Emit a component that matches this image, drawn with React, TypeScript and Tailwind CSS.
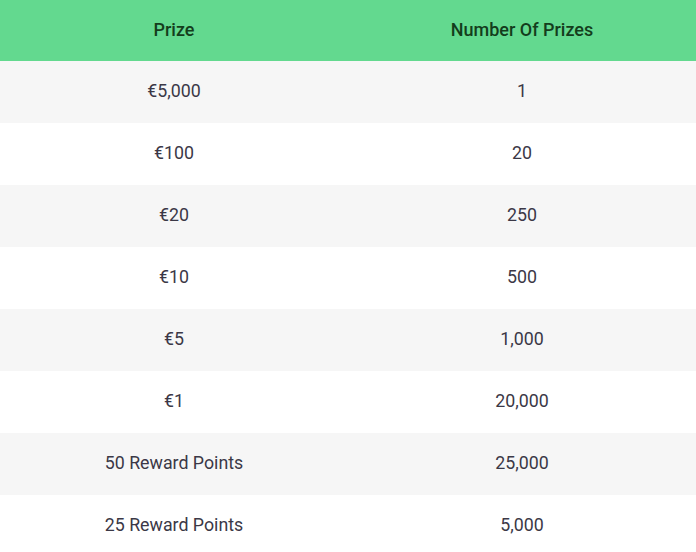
const rows = [
  ['€5,000', '1'],
  ['€100', '20'],
  ['€20', '250'],
  ['€10', '500'],
  ['€5', '1,000'],
  ['€1', '20,000'],
  ['50 Reward Points', '25,000'],
  ['25 Reward Points', '5,000'],
];

export default function App() {
  return (
    <div className="w-[696px] bg-white font-['Roboto',sans-serif]">
      <table className="w-full border-collapse table-fixed">
        <thead>
          <tr className="bg-[#63d98f] h-[61px]">
            <th className="pb-[2px] text-[18px] font-medium text-[#143d1c] text-center">Prize</th>
            <th className="pb-[2px] text-[18px] font-medium text-[#143d1c] text-center">Number Of Prizes</th>
          </tr>
        </thead>
        <tbody>
          {rows.map((r, i) => (
            <tr key={i} className={`h-[62px] ${i % 2 === 0 ? 'bg-[#f6f6f6]' : 'bg-white'}`}>
              <td className="pb-[1px] text-[17.8px] text-[#3b3846] text-center">{r[0]}</td>
              <td className="pb-[1px] text-[17.8px] text-[#3b3846] text-center">{r[1]}</td>
            </tr>
          ))}
        </tbody>
      </table>
    </div>
  );
}
